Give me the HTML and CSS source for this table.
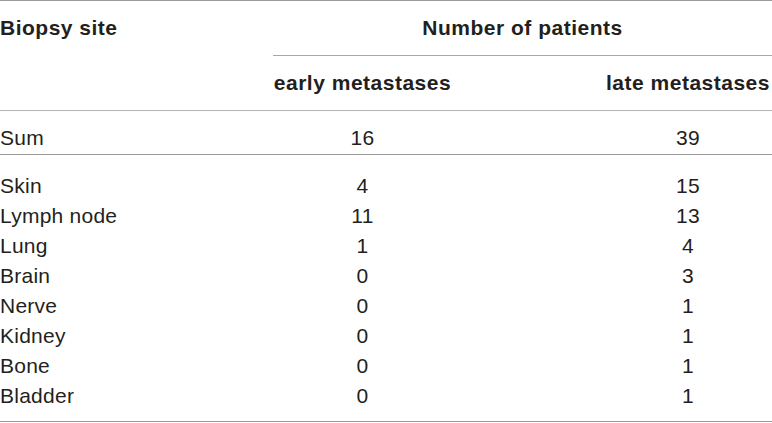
FILE: index.html
```html
<!DOCTYPE html>
<html>
<head>
<meta charset="utf-8">
<link rel="stylesheet" href="styles.css">
</head>
<body>
<table class="data">
  <colgroup>
    <col class="c-site">
    <col class="c-early">
    <col class="c-gap">
    <col class="c-late">
  </colgroup>
  <thead>
    <tr class="h1">
      <th rowspan="2" class="site">Biopsy site</th>
      <th colspan="3" class="group">Number of patients</th>
    </tr>
    <tr class="h2">
      <th class="num">early metastases</th>
      <th class="gap"></th>
      <th class="num">late metastases</th>
    </tr>
  </thead>
  <tbody class="sum">
    <tr>
      <td class="site">Sum</td>
      <td class="num">16</td>
      <td class="gap"></td>
      <td class="num">39</td>
    </tr>
  </tbody>
  <tbody class="rows">
    <tr class="first"><td class="site">Skin</td><td class="num">4</td><td class="gap"></td><td class="num">15</td></tr>
    <tr><td class="site">Lymph node</td><td class="num">11</td><td class="gap"></td><td class="num">13</td></tr>
    <tr><td class="site">Lung</td><td class="num">1</td><td class="gap"></td><td class="num">4</td></tr>
    <tr><td class="site">Brain</td><td class="num">0</td><td class="gap"></td><td class="num">3</td></tr>
    <tr><td class="site">Nerve</td><td class="num">0</td><td class="gap"></td><td class="num">1</td></tr>
    <tr><td class="site">Kidney</td><td class="num">0</td><td class="gap"></td><td class="num">1</td></tr>
    <tr><td class="site">Bone</td><td class="num">0</td><td class="gap"></td><td class="num">1</td></tr>
    <tr class="last"><td class="site">Bladder</td><td class="num">0</td><td class="gap"></td><td class="num">1</td></tr>
  </tbody>
</table>
</body>
</html>
```

FILE: styles.css
```css
html, body {
  margin: 0;
  padding: 0;
  background: #fff;
}
body {
  font-family: "Liberation Sans", Arial, Helvetica, sans-serif;
  color: #231f20;
}
.data {
  width: 772px;
  table-layout: fixed;
  border-collapse: separate;
  border-spacing: 0;
  border-top: 1px solid #9a9a9a;
  font-size: 21px;
  line-height: 20px;
  letter-spacing: 0.25px;
}
.c-site { width: 273px; }
.c-early { width: 179px; }
.c-gap { width: 152px; }
.c-late { width: 168px; }
th, td {
  padding: 0;
  vertical-align: top;
  white-space: nowrap;
}
th {
  font-weight: bold;
  letter-spacing: 0.5px;
}
th.site, td.site { text-align: left; }
.num, .group { text-align: center; }
.h1 th { padding-top: 17px; padding-bottom: 17px; }
.h1 .group { border-bottom: 1px solid #a8a8a8; }
.h1 .site { border-bottom: 1px solid #b4b4b4; }
.h2 th { padding-top: 17px; padding-bottom: 17px; border-bottom: 1px solid #b4b4b4; }
.sum td { padding-top: 17px; padding-bottom: 6px; border-bottom: 1px solid #9a9a9a; }
.rows td { padding-top: 5px; padding-bottom: 5px; }
.rows .first td { padding-top: 21px; }
.rows .last td { padding-bottom: 15px; border-bottom: 1px solid #9a9a9a; }
```
